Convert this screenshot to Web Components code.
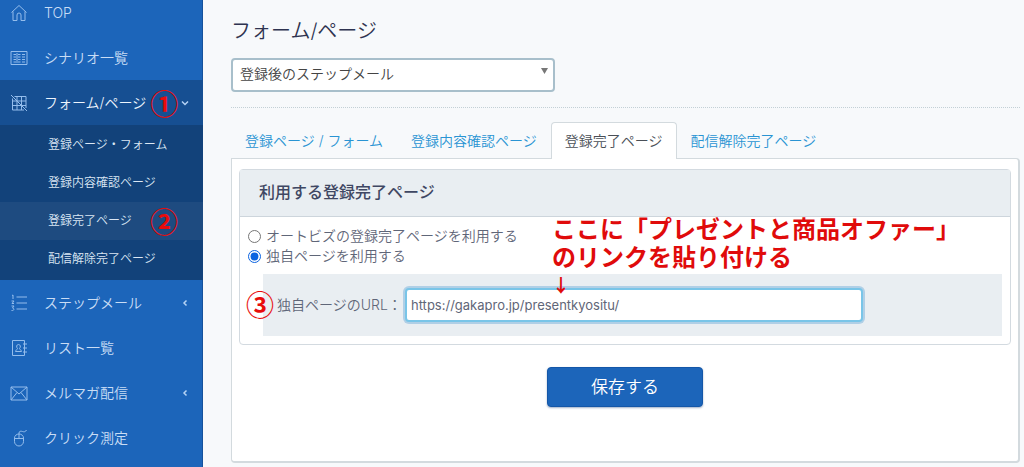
<!DOCTYPE html>
<html lang="ja">
<head>
<meta charset="utf-8">
<meta name="viewport" content="width=device-width, initial-scale=1">
<title>フォーム/ページ</title>
<style>
  body {
    margin: 0;
    background: #f7f9fb;
    font-family: Inter, "Noto Sans CJK JP", sans-serif;
    font-size: 14px;
    font-weight: 350;
    line-height: 20px;
    color: #5f6678;
  }
</style>
</head>
<body>
<app-layout>
  <side-nav slot="nav">
    <nav-item icon="home">TOP</nav-item>
    <nav-item icon="list">シナリオ一覧</nav-item>
    <nav-item icon="grid" arrow="down" active>フォーム/ページ<step-badge slot="badge">①</step-badge>
      <sub-item slot="sub">登録ページ・フォーム</sub-item>
      <sub-item slot="sub">登録内容確認ページ</sub-item>
      <sub-item slot="sub" active>登録完了ページ<step-badge slot="badge">②</step-badge></sub-item>
      <sub-item slot="sub">配信解除完了ページ</sub-item>
    </nav-item>
    <nav-item icon="steps" arrow="left">ステップメール</nav-item>
    <nav-item icon="contact">リスト一覧</nav-item>
    <nav-item icon="mail" arrow="left">メルマガ配信</nav-item>
    <nav-item icon="mouse">クリック測定</nav-item>
  </side-nav>
  <page-header heading="フォーム/ページ">
    <scenario-select value="登録後のステップメール"></scenario-select>
  </page-header>
  <page-tabs>
    <tab-link slot="tab">登録ページ / フォーム</tab-link>
    <tab-link slot="tab">登録内容確認ページ</tab-link>
    <tab-link slot="tab" active>登録完了ページ</tab-link>
    <tab-link slot="tab">配信解除完了ページ</tab-link>
    <panel-box heading="利用する登録完了ページ">
      <complete-page-form url="https://gakapro.jp/presentkyositu/"></complete-page-form>
    </panel-box>
    <save-button>保存する</save-button>
  </page-tabs>
</app-layout>

<script>
(() => {
  const icons = {
    home: '<path d="M1.500 8.500 9 1.500l7.500 7M3 7.500v9h4v-5.500a2 2 0 0 1 4 0v5.500h4v-9"/>',
    list: '<path d="M1 2.500h16v13H1zM3.500 5.500h2.500M8 5.500h2.500M12 5.500h3M3.500 8h2.500M8 8h2.500M12 8h3M3.500 10.500h2.500M8 10.500h2.500M12 10.500h3M3.500 13h2.500M8 13h2.500M12 13h3M7 4v10"/>',
    grid: '<path d="M4.500 2.500h11.500v11.500M2.500 4.500v11.500h11.500M7 2.500v13.500M11.500 2.500v13.500M2.500 7h13.500M2.500 11.500h13.500M1 1l16 16"/>',
    steps: '<path d="M6.500 3H17M6.500 9H17M6.500 15H17M2 1.500l1-.5v4M1.500 7h2.500L2 9.500h2M1.500 12h2.500L2.500 14c2 0 2 3-1 2.500"/>',
    contact: '<path d="M2.500 1.500h12v15h-12zM13 5h4M13 9h4M13 13h4M5.500 12.500c0-2 2-1.500 2-3-1.500-1.500-1-4 1-4s2.500 2.500 1 4c0 1.500 2 1 2 3z"/>',
    mail: '<path d="M1 3h16v13H1zM1 3l8 7 8-7M1 16l6-7.500M17 16l-6-7.500"/>',
    mouse: '<path d="M4.500 9a4.500 4 0 0 1 9 0v3.500a4.500 4.500 0 0 1-9 0zM4.500 9.500h9M9 9.500V4c0-2 2-2 3.500-1.500S15.500 3 16.500 1"/>'
  };

  const arrows = {
    down: '<path d="M1 2.500 4 5.500 7 2.500"/>',
    left: '<path d="M5.500 1.500 3 4 5.500 6.500"/>'
  };

  function define(name, render) {
    customElements.define(name, class extends HTMLElement {
      constructor() {
        super();
        this.attachShadow({ mode: "open" });
      }
      connectedCallback() {
        this.shadowRoot.innerHTML = render(this);
      }
    });
  }

  define("app-layout", () => `
    <style>
      :host {
        display: flex;
        min-height: 100vh;
      }
      main {
        flex: 1;
        min-width: 0;
        padding: 16px 4px 4px 28px;
      }
    </style>
    <slot name="nav"></slot>
    <main><slot></slot></main>
  `);

  define("side-nav", () => `
    <style>
      :host {
        display: block;
        flex: none;
        width: 203px;
        overflow: hidden;
        background: #1c65ba;
        box-shadow: inset -1px 0 #15529c;
      }
      nav {
        margin-top: -10px;
      }
    </style>
    <nav><slot></slot></nav>
  `);

  define("nav-item", (el) => `
    <style>
      :host {
        display: block;
      }
      a {
        display: flex;
        align-items: center;
        height: 45px;
        padding: 0 14px 0 10px;
        color: #c9ddf5;
        text-decoration: none;
      }
      :host([active]) a {
        background: #164f92;
        color: #eef5fd;
      }
      svg {
        flex: none;
        fill: none;
        stroke: #94bdec;
      }
      .label {
        display: flex;
        align-items: center;
        gap: 4px;
        flex: 1;
        margin-left: 16px;
        white-space: nowrap;
      }
      .arrow {
        stroke: #b5d3f5;
        stroke-width: 1.5;
      }
      .sub {
        background: #12427a;
      }
      :host([active]) .sub {
        padding: 1px 0 2px;
      }
    </style>
    <a href="#">
      <svg width="18" height="18" viewBox="0 0 18 18">${icons[el.getAttribute("icon")]}</svg>
      <span class="label"><span><slot></slot></span><slot name="badge"></slot></span>
      ${el.hasAttribute("arrow") ? `<svg class="arrow" width="8" height="8" viewBox="0 0 8 8">${arrows[el.getAttribute("arrow")]}</svg>` : ""}
    </a>
    <div class="sub"><slot name="sub"></slot></div>
  `);

  define("sub-item", () => `
    <style>
      :host {
        display: block;
        font-size: 12px;
      }
      a {
        position: relative;
        display: flex;
        align-items: center;
        height: 38px;
        padding-left: 48px;
        color: #dbe7f4;
        text-decoration: none;
      }
      :host([active]) a {
        background: #1e4b80;
      }
      ::slotted(step-badge) {
        position: absolute;
        left: 150px;
      }
    </style>
    <a href="#"><slot></slot><slot name="badge"></slot></a>
  `);

  define("step-badge", () => `
    <style>
      :host {
        display: block;
        width: 28px;
        color: #e80c0c;
        font: 700 28px/28px "Noto Sans CJK JP", sans-serif;
      }
    </style>
    <slot></slot>
  `);

  define("page-header", (el) => `
    <style>
      :host {
        display: block;
        margin-bottom: 14px;
        padding-bottom: 15px;
        border-bottom: 1px dotted #c3d0d6;
      }
      h1 {
        margin: 0 0 12px;
        color: #2e3350;
        font-size: 20px;
        font-weight: 350;
        line-height: 30px;
      }
    </style>
    <h1>${el.getAttribute("heading")}</h1>
    <slot></slot>
  `);

  define("scenario-select", (el) => `
    <style>
      :host {
        display: grid;
        max-width: 324px;
      }
      select, svg {
        grid-area: 1 / 1;
      }
      select {
        appearance: none;
        width: 100%;
        height: 34px;
        padding: 0 24px 2px 7px;
        border: 2px solid #a8bfcb;
        border-radius: 4px;
        background: #fff;
        color: #444;
        font: inherit;
      }
      svg {
        justify-self: end;
        margin: 10px 7px 0 0;
        fill: #777;
        pointer-events: none;
      }
    </style>
    <select aria-label="シナリオ"><option>${el.getAttribute("value")}</option></select>
    <svg width="7" height="6" viewBox="0 0 7 6"><path d="M0 0h7L3.500 6z"/></svg>
  `);

  define("page-tabs", () => `
    <style>
      :host {
        display: block;
      }
      nav {
        display: flex;
      }
      section {
        padding: 10px 7px 54px;
        border: 1px solid #d3dade;
        border-right-width: 2px;
        border-bottom-width: 2px;
        border-radius: 0 4px 4px 4px;
        background: #fff;
      }
    </style>
    <nav><slot name="tab"></slot></nav>
    <section><slot></slot></section>
  `);

  define("tab-link", () => `
    <style>
      :host {
        display: block;
        margin-bottom: -1px;
      }
      a {
        display: block;
        padding: 7px 13px 8px;
        border: 1px solid transparent;
        border-bottom: 0;
        border-radius: 4px 4px 0 0;
        color: #2994d3;
        line-height: 21px;
        text-decoration: none;
        white-space: nowrap;
      }
      :host([active]) a {
        position: relative;
        border-color: #d3dade;
        background: #fff;
        color: #4a4f57;
      }
    </style>
    <a href="#"><slot></slot></a>
  `);

  define("panel-box", (el) => `
    <style>
      :host {
        display: block;
        border: 1px solid #d3dae0;
        border-radius: 4px;
      }
      h2 {
        margin: 0;
        padding: 11px 19px 12px;
        border-bottom: 1px solid #cdd5dc;
        background: #e9eef2;
        color: #3f4763;
        font-size: 16px;
        font-weight: 500;
        line-height: 23px;
      }
    </style>
    <h2>${el.getAttribute("heading")}</h2>
    <slot></slot>
  `);

  define("complete-page-form", (el) => `
    <style>
      :host {
        display: block;
        position: relative;
        padding: 9px 8px 8px;
      }
      .choice {
        display: flex;
        align-items: center;
        gap: 5px;
        height: 20px;
      }
      .choice input {
        width: 13px;
        height: 13px;
        margin: 0;
        accent-color: #0a63e0;
      }
      .url-row {
        position: relative;
        display: flex;
        align-items: center;
        gap: 8px;
        margin: 8px 0 0 15px;
        padding: 14px;
        background: #e9eef2;
      }
      .url-row label {
        flex: none;
        width: 120px;
        white-space: nowrap;
      }
      .url-row input {
        box-sizing: border-box;
        flex: 0 1 458px;
        min-width: 0;
        height: 34px;
        padding: 0 4px;
        border: 2px solid #79c5e8;
        border-radius: 4px;
        outline: 0;
        box-shadow: 0 0 0 2px #b0cfe6;
        background: #fff;
        color: #5f6678;
        font: inherit;
        font-size: 13px;
        font-weight: 400;
      }
      step-badge {
        position: absolute;
        left: -17px;
        top: 16px;
      }
      .note {
        position: absolute;
        top: -1px;
        left: 312px;
        margin: 0;
        color: #e00b0b;
        font-size: 24px;
        font-weight: 700;
        line-height: 28px;
        white-space: nowrap;
      }
      .note span {
        display: block;
        font: 700 18px/24px "Noto Sans CJK JP", sans-serif;
      }
    </style>
    <div class="choice">
      <input type="radio" name="page" id="default-page">
      <label for="default-page">オートビズの登録完了ページを利用する</label>
    </div>
    <div class="choice">
      <input type="radio" name="page" id="own-page" checked>
      <label for="own-page">独自ページを利用する</label>
    </div>
    <div class="url-row">
      <step-badge>③</step-badge>
      <label for="url">独自ページのURL：</label>
      <input type="text" id="url" value="${el.getAttribute("url")}">
    </div>
    <p class="note">ここに「プレゼントと商品オファー」<br>のリンクを貼り付ける<span>↓</span></p>
  `);

  define("save-button", () => `
    <style>
      :host {
        display: flex;
        justify-content: center;
        margin-top: 22px;
      }
      button {
        width: 156px;
        height: 40px;
        border: 1px solid #1457a8;
        border-radius: 4px;
        background: #1c65ba;
        box-shadow: 0 1px 2px rgba(20, 60, 120, 0.4);
        color: #fff;
        font: inherit;
        font-size: 17px;
      }
    </style>
    <button type="button"><slot></slot></button>
  `);
})();
</script>
</body>
</html>
